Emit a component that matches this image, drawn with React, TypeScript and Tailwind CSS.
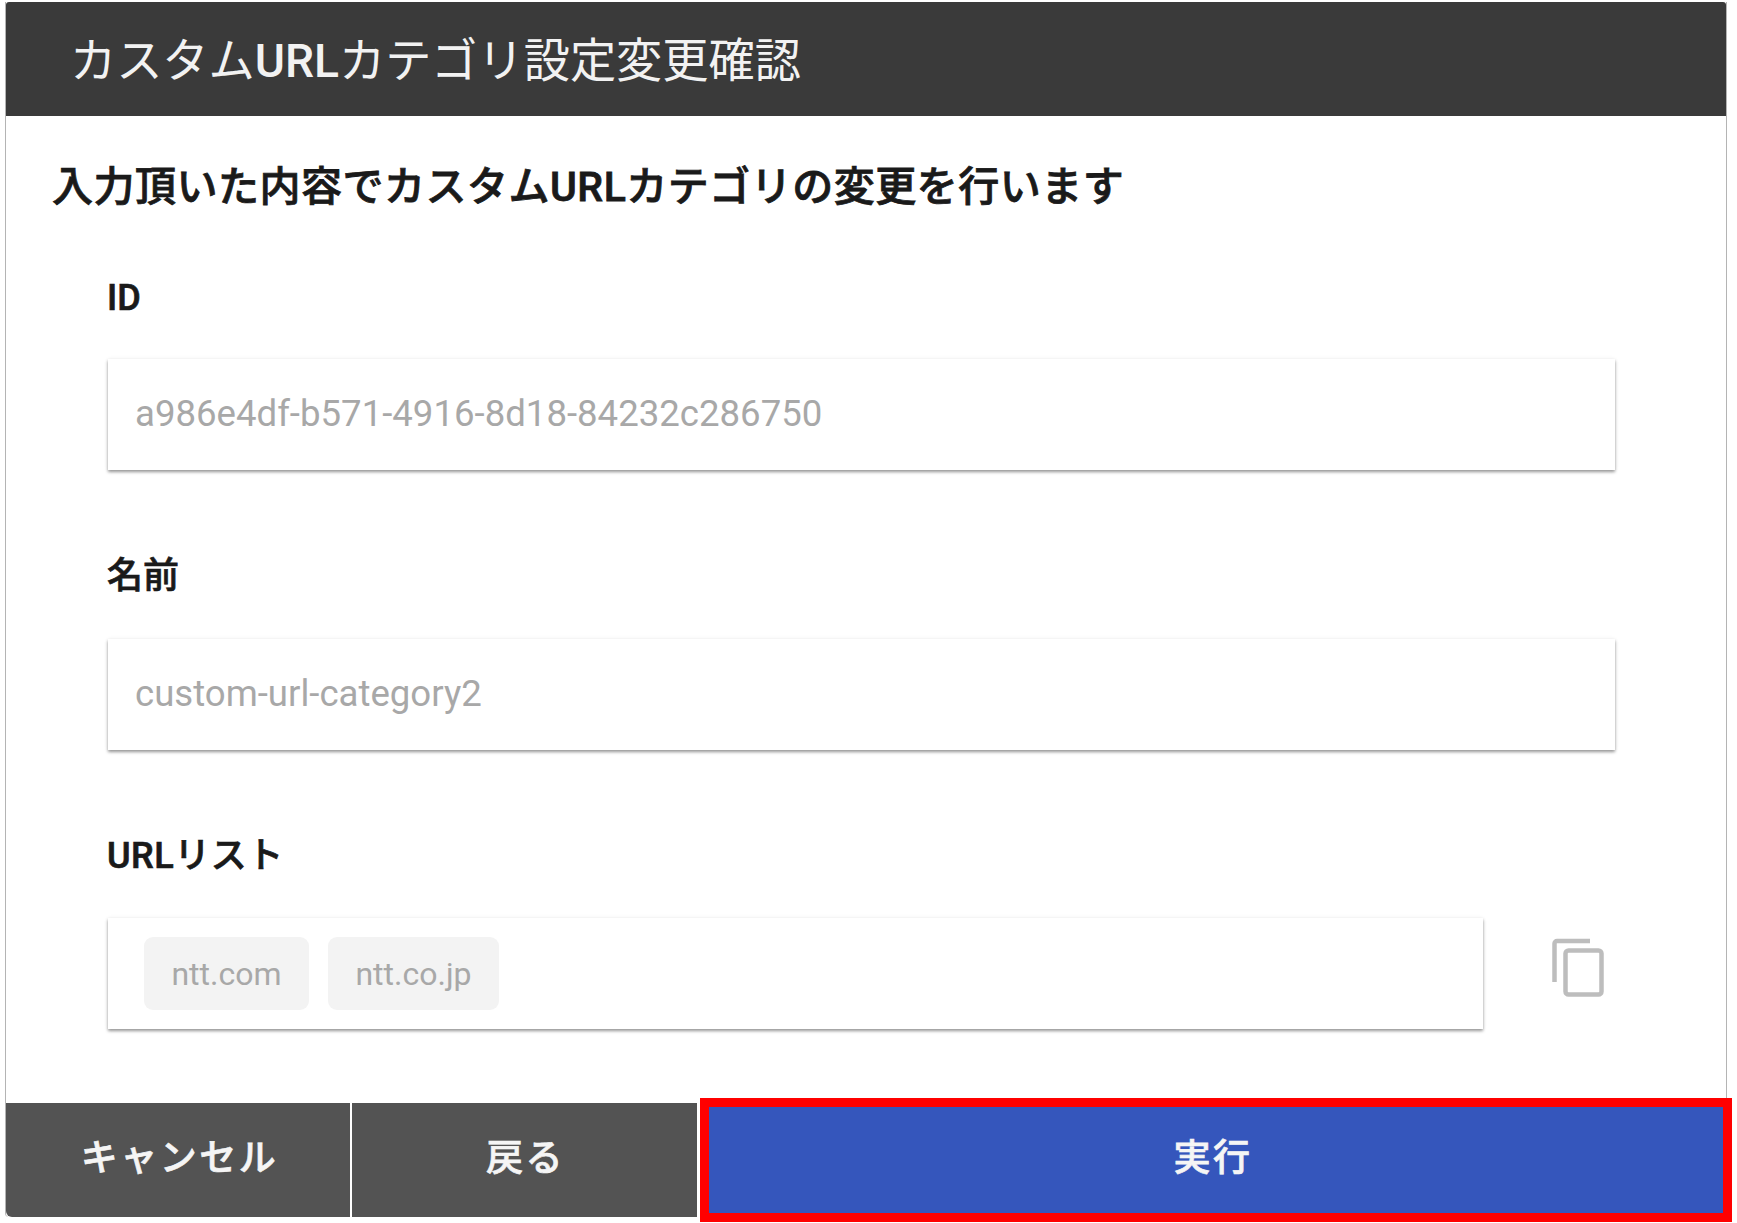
const fontStack = "font-['Roboto','Noto_Sans_CJK_JP',sans-serif]";

function Label({ children, className }: { children: React.ReactNode; className: string }) {
  return <div className={`h-[50px] pl-[101px] text-[36px] leading-[50px] font-medium text-[#1a1a1a] [-webkit-text-stroke:0.7px_#1a1a1a] ${className}`}>{children}</div>;
}

function Field({ value, className }: { value: string; className: string }) {
  return (
    <div className={`ml-[102px] flex h-[111px] w-[1507px] items-center bg-white pl-[27px] text-[36.6px] text-[#a8a8a8] shadow-[0_2px_3px_rgba(0,0,0,0.4),0_0_5px_rgba(0,0,0,0.05)] ${className}`}>
      {value}
    </div>
  );
}

function Chip({ label, className }: { label: string; className: string }) {
  return (
    <span className={`flex h-[73px] items-center justify-center rounded-[9px] bg-[#f3f3f3] text-[32px] text-[#a8a8a8] ${className}`}>
      {label}
    </span>
  );
}

export default function App() {
  return (
    <div className={`min-h-screen overflow-hidden bg-white pt-[2px] pl-[5px] ${fontStack}`}>
      <div className="w-[1722px] rounded-b-[4px] border-x border-x-[#b4b4b4]">
        {/* Title */}
        <div className="flex h-[114px] items-center rounded-t-[3px] bg-[#3a3a3a] pt-[6px] pl-[64px] text-[46.2px] text-[#f2f2f2]">
          カスタム<span className="font-medium">URL</span>カテゴリ設定変更確認
        </div>

        <div className="mt-[46px] h-[50px] pl-[46px] text-[41px] leading-[50px] font-medium tracking-[0.5px] text-[#1a1a1a] [-webkit-text-stroke:0.8px_#1a1a1a]">
          入力頂いた内容でカスタムURLカテゴリの変更を行います
        </div>

        <Label className="mt-[61px]">ID</Label>
        <Field className="mt-[36px]" value="a986e4df-b571-4916-8d18-84232c286750" />

        <Label className="mt-[81px]">名前</Label>
        <Field className="mt-[38px]" value="custom-url-category2" />

        <Label className="mt-[81px] tracking-[0.5px]">URLリスト</Label>
        <div className="mt-[37px] ml-[102px] flex items-start">
          <div className="flex h-[111px] w-[1375px] items-center gap-[19px] bg-white pl-[36px] shadow-[0_2px_3px_rgba(0,0,0,0.4),0_0_5px_rgba(0,0,0,0.05)]">
            <Chip label="ntt.com" className="w-[165px]" />
            <Chip label="ntt.co.jp" className="w-[171px]" />
          </div>
          <svg className="mt-[20px] ml-[69px]" width="52" height="60" viewBox="0 0 52 60" fill="none" stroke="#bdbdbd" strokeWidth="4.5">
            <path d="M2.5 44V5.5a2.5 2.5 0 0 1 2.5-2.5H38" />
            <rect x="13.5" y="12.5" width="36" height="44" rx="3" />
          </svg>
        </div>

        {/* Footer buttons */}
        <div className="mt-[74px] flex h-[114px] text-[37px] font-medium tracking-[2.5px] text-[#f5f5f5] [-webkit-text-stroke:0.7px_#f5f5f5]">
          <button className="h-full w-[344px] rounded-bl-[6px] bg-[#535353] pb-[2px] pl-[3px]">キャンセル</button>
          <button className="ml-[2px] h-full w-[345px] bg-[#535353] pb-[2px] pl-[2px]">戻る</button>
          <button className="-mt-[5px] -mr-[6px] ml-[3px] box-border h-[124px] flex-1 border-[9px] border-[#ff0000] bg-[#3556bc] pr-[6px] pb-[2px]">実行</button>
        </div>
      </div>
    </div>
  );
}
